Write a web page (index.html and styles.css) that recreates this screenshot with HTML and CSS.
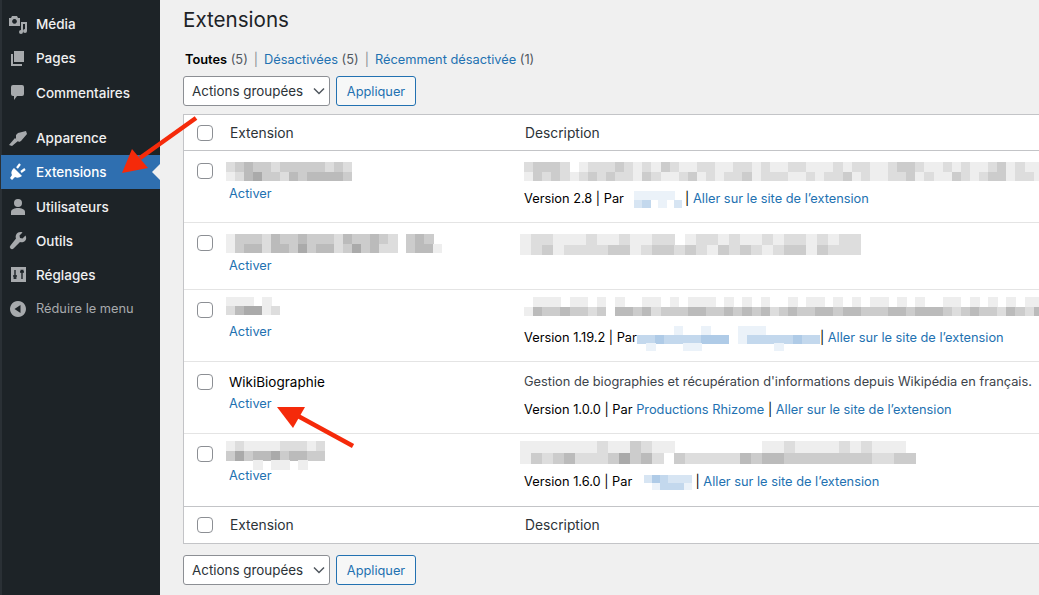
FILE: index.html
```html
<!DOCTYPE html>
<html lang="fr">
  <head>
    <meta charset="UTF-8" />
    <title>Extensions</title>
    <link rel="stylesheet" href="styles.css">
  </head>
  <body>
    <nav class="sidebar">
      <ul class="menu">
        <li class="menu-item">
          <svg class="menu-icon" viewBox="0 0 20 20"><path fill-rule="evenodd" d="M1 4h2l1-2h5l1 2h2v8H1zM6.500 5a2.400 2.400 0 1 0 .01 0z"/><path d="M13 8h6v9a2 2 0 1 1-2-2v-5h-2v8a2 2 0 1 1-2-2z"/></svg>
          Média
        </li>
        <li class="menu-item">
          <svg class="menu-icon" viewBox="0 0 20 20"><path d="M6 3h10v11H6z"/><path d="M3 6h2v10h9v2H3z"/></svg>
          Pages
        </li>
        <li class="menu-item">
          <svg class="menu-icon" viewBox="0 0 20 20"><path d="M5 2h9a2 2 0 0 1 2 2v7a2 2 0 0 1-2 2H9l-3 4v-4H5a2 2 0 0 1-2-2V4a2 2 0 0 1 2-2z"/></svg>
          Commentaires
        </li>
        <li class="menu-item menu-group">
          <svg class="menu-icon" viewBox="0 0 20 20"><path d="M8 7l2-2 8-2 1 3-6 7-2 1-3-3zM7 10l3 3-6 5-3-1z"/></svg>
          Apparence
        </li>
        <li class="menu-item active">
          <svg class="menu-icon" viewBox="0 0 20 20"><path d="M6 6l8 8c-3 2-5 2-7 1l-3 3-2-2 2-3C3 11 3 9 6 6z"/><path class="plug-pin" d="M9 6l3-4M13 10l4-3"/></svg>
          Extensions
        </li>
        <li class="menu-item">
          <svg class="menu-icon" viewBox="0 0 20 20"><circle cx="10" cy="6" r="4"/><path d="M3 18v-3c0-3 4-4 7-4s7 1 7 4v3z"/></svg>
          Utilisateurs
        </li>
        <li class="menu-item">
          <svg class="menu-icon" viewBox="0 0 20 20"><path d="M17.500 4.500l-3 3-2.500-.5-.5-2.500 3-3c-2.500-1-5 0-6 1.500s-1 3-.5 4.500L2.500 14.500a2 2 0 0 0 3 3L12 11c1.500.5 3.500.3 5-1 1.500-1.500 1.500-3.500.5-5.500z"/></svg>
          Outils
        </li>
        <li class="menu-item">
          <svg class="menu-icon" viewBox="0 0 20 20"><path d="M3 2h15v15H3z"/><path class="slider-line" d="M7 5v9M5 11h4M5.500 13h3M14 5v9M12 7h4M12.500 5.500h3"/></svg>
          Réglages
        </li>
        <li class="menu-item menu-collapse">
          <svg class="menu-icon" viewBox="0 0 20 20"><path fill-rule="evenodd" d="M10 2a8 8 0 1 1-.01 0zM12.500 6v8L6.500 10z"/></svg>
          Réduire le menu
        </li>
      </ul>
    </nav>

    <main class="content">
      <h1>Extensions</h1>

      <ul class="subsub">
        <li><b>Toutes</b> <span class="count">(5)</span></li>
        <li><a href="#">Désactivées</a> <span class="count">(5)</span></li>
        <li><a href="#">Récemment désactivée</a> <span class="count">(1)</span></li>
      </ul>

      <div class="tablenav">
        <div class="select">
          Actions groupées
          <svg class="chevron" viewBox="0 0 12 8"><path d="M1 1.500l5 5 5-5"/></svg>
        </div>
        <button class="button" type="button">Appliquer</button>
      </div>

      <table class="plugins">
        <thead>
          <tr>
            <th class="check"><input type="checkbox" /></th>
            <th class="name-col">Extension</th>
            <th>Description</th>
          </tr>
        </thead>
        <tbody>
          <tr class="row-1">
            <td class="check"><input type="checkbox" /></td>
            <td>
              <div class="plugin-name"><span class="mosaic pull-name" data-cw="9" data-ch="9.500" data-rows="dcbccdcccccdcd|edbaccdbcbbbbc"></span></div>
              <a href="#">Activer</a>
            </td>
            <td>
              <div class="plugin-desc"><span class="mosaic" data-cw="9.100" data-ch="9.500" data-rows="dcccdfedddcdedecdeeddeeddedeeddeeededdeedccdeededeedcedeecd|ecdcdedcdcddecdeedcededdcedddeededdcedeeddcedeecdedcceddedc"></span></div>
              <div class="plugin-meta">Version 2.8 | Par <span class="mosaic inline blue pull-author" data-cw="8" data-ch="8.500" data-rows="feeeeef|fdcfefd"></span> | <a href="#">Aller sur le site de l’extension</a></div>
            </td>
          </tr>
          <tr class="row-2">
            <td class="check"><input type="checkbox" /></td>
            <td>
              <div class="plugin-name"><span class="mosaic pull-name" data-cw="9" data-ch="9.500" data-rows="ecccdbccbcccdbccbcdfcbcf|ecbbdbbcacbbdcacbddfcbbe"></span></div>
              <a href="#">Activer</a>
            </td>
            <td>
              <div class="plugin-desc"><span class="mosaic pull-wide" data-cw="11" data-ch="10.500" data-rows="eddeeedeedeeddfeddedeededdededd|edceddddccedccdcdecdcdedccecddd"></span></div>
            </td>
          </tr>
          <tr class="row-3">
            <td class="check"><input type="checkbox" /></td>
            <td>
              <div class="plugin-name"><span class="mosaic pull-name pull-up" data-cw="9" data-ch="9" data-rows="eeefef|dbaaed"></span></div>
              <a href="#">Activer</a>
            </td>
            <td>
              <div class="plugin-desc"><span class="mosaic pull-up" data-cw="9.100" data-ch="9.500" data-rows="feeefeefefeffeefefeeefefefeffefeefefefeefefeffeefefefefeefee|ebccbccdcfbbcbdcccbbccbcbcbdcbccbbcbbcccbbcbbbcdcbccdbcdbcbd"></span></div>
              <div class="plugin-meta">Version 1.19.2 | Par<span class="mosaic inline blue" data-cw="9.150" data-ch="8.500" data-rows="ffffeffefffeeeffffff|ccbccccbbbfecccccbcc|fefffeeffffffffeffff"></span>| <a href="#">Aller sur le site de l’extension</a></div>
            </td>
          </tr>
          <tr class="row-4">
            <td class="check"><input type="checkbox" /></td>
            <td>
              <div class="plugin-name">WikiBiographie</div>
              <a href="#">Activer</a>
            </td>
            <td>
              <div class="plugin-desc">Gestion de biographies et récupération d'informations depuis Wikipédia en français.</div>
              <div class="plugin-meta">Version 1.0.0 | Par <a href="#">Productions Rhizome</a> | <a href="#">Aller sur le site de l’extension</a></div>
            </td>
          </tr>
          <tr class="row-5">
            <td class="check"><input type="checkbox" /></td>
            <td>
              <div class="plugin-name"><span class="mosaic pull-name pull-up" data-cw="9" data-ch="9.500" data-rows="edeeeeddded|cacbbacbbcc|fffefeefeff"></span></div>
              <a href="#">Activer</a>
            </td>
            <td>
              <div class="plugin-desc"><span class="mosaic pull-wide pull-up" data-cw="11" data-ch="11.500" data-rows="eeeeeeedeecdeeffffffffeedeeeededeeef|ecdcbdddcacbdfcdddddbcbbccccccccddcc"></span></div>
              <div class="plugin-meta">Version 1.6.0 | Par <span class="mosaic inline blue" data-cw="8" data-ch="7.500" data-rows="fdbcddd|ffeccce"></span> | <a href="#">Aller sur le site de l’extension</a></div>
            </td>
          </tr>
        </tbody>
        <tfoot>
          <tr>
            <th class="check"><input type="checkbox" /></th>
            <th class="name-col">Extension</th>
            <th>Description</th>
          </tr>
        </tfoot>
      </table>

      <div class="tablenav tablenav-bottom">
        <div class="select">
          Actions groupées
          <svg class="chevron" viewBox="0 0 12 8"><path d="M1 1.500l5 5 5-5"/></svg>
        </div>
        <button class="button" type="button">Appliquer</button>
      </div>
    </main>

    <svg class="arrows" viewBox="0 0 1039 595">
      <path class="arrow-line" d="M196 118L140 158"/>
      <path class="arrow-head" d="M122 173L132 149L148 168z"/>
      <path class="arrow-line" d="M353 446L298 416"/>
      <path class="arrow-head" d="M277 407L305 407L293 428z"/>
    </svg>

    <script src="mosaic.js"></script>
  </body>
</html>
```

FILE: styles.css
```css
* {
  box-sizing: border-box;
}
html,
body {
  height: 100%;
}
body {
  margin: 0;
  display: flex;
  overflow: hidden;
  position: relative;
  font-family: Inter, "Liberation Sans", sans-serif;
  font-size: 12.8px;
  line-height: 18px;
  color: #000;
  background: #f0f0f0;
}
a {
  color: #2271b1;
  text-decoration: none;
}

/* sidebar */
.sidebar {
  flex: 0 0 160px;
  background: #1d2327;
  border-left: 2px solid #2a3035;
}
.menu {
  list-style: none;
  margin: 7px 0 0;
  padding: 0;
}
.menu-item {
  position: relative;
  display: flex;
  align-items: center;
  gap: 8px;
  height: 34.3px;
  padding-left: 6px;
  font-size: 13.5px;
  font-weight: 500;
  color: #f0f0f1;
}
.menu-group {
  margin-top: 11px;
}
.menu-icon {
  width: 20px;
  height: 20px;
  fill: #a7aaad;
}
.active {
  margin-left: -1px;
  padding-left: 7px;
  background: #2f6fb0;
  color: #fff;
}
.active .menu-icon {
  fill: #fff;
}
.active::after {
  content: "";
  position: absolute;
  right: 0;
  top: 50%;
  margin-top: -8px;
  border: 8px solid transparent;
  border-right-color: #f0f0f0;
  border-left-width: 0;
}
.plug-pin {
  fill: none;
  stroke: #fff;
  stroke-width: 2.200;
}
.slider-line {
  fill: none;
  stroke: #1d2327;
  stroke-width: 1.400;
}
.menu-collapse {
  margin-top: -1px;
  font-size: 12.8px;
  font-weight: 400;
  color: #a7aaad;
}

/* main */
.content {
  flex: 1;
  min-width: 0;
  padding-left: 23px;
}
h1 {
  margin: 6px 0 0;
  font-size: 20.6px;
  line-height: 28px;
  font-weight: 400;
  color: #1d2327;
}
.subsub {
  list-style: none;
  display: flex;
  margin: 17px 0 0 2px;
  padding: 0;
  height: 18px;
  color: #50575e;
}
.subsub li + li::before {
  content: "|";
  margin: 0 6px;
  color: #8c8f94;
}
.subsub b {
  font-weight: 600;
  color: #000;
}
.count {
  color: #50575e;
}
.tablenav {
  display: flex;
  gap: 6px;
  margin: 7px 0 8px;
}
.tablenav-bottom {
  margin-top: 11px;
}
.select {
  display: flex;
  align-items: center;
  justify-content: space-between;
  width: 147px;
  height: 30px;
  padding: 0 4px 0 8px;
  font-size: 13.4px;
  color: #2c3338;
  background: #fff;
  border: 1px solid #8c8f94;
  border-radius: 3px;
}
.chevron {
  width: 12px;
  height: 8px;
  fill: none;
  stroke: #50575e;
  stroke-width: 1.500;
}
.button {
  width: 80px;
  height: 30px;
  padding: 0;
  font-family: inherit;
  font-size: 12.8px;
  color: #2271b1;
  background: #f6f7f7;
  border: 1px solid #2271b1;
  border-radius: 3px;
}

/* table */
.plugins {
  width: 860px;
  table-layout: fixed;
  border-collapse: separate;
  border-spacing: 0;
  background: #fff;
  border: 1px solid #c3c4c7;
}
.plugins th {
  height: 36px;
  padding: 1px 0 0 1px;
  text-align: left;
  font-size: 13.8px;
  font-weight: 400;
  color: #2c3338;
}
.plugins thead th {
  border-bottom: 1px solid #c3c4c7;
}
.plugins tfoot th {
  padding-top: 0;
  padding-bottom: 1px;
}
.plugins td {
  padding: 11px 0 0;
  vertical-align: top;
  border-bottom: 1px solid #e4e4e4;
}
.plugins tbody tr:last-child td {
  border-bottom-color: #c3c4c7;
}
.plugins .check {
  width: 45px;
  padding: 0 0 0 13px;
}
.plugins td.check {
  padding-top: 12px;
}
th:nth-child(2),
td:nth-child(2) {
  width: 295px;
}
.row-1 {
  height: 72px;
}
.row-2 {
  height: 67px;
}
.row-3 {
  height: 72px;
}
.row-4 {
  height: 72px;
}
.row-5 {
  height: 73px;
}
input[type="checkbox"] {
  appearance: none;
  display: block;
  width: 16px;
  height: 16px;
  margin: 0;
  background: #fff;
  border: 1px solid #8c8f94;
  border-radius: 4px;
}
.plugin-name {
  display: flow-root;
  height: 18px;
  margin-bottom: 4px;
  font-size: 13.5px;
}
.row-1 .plugin-name,
.row-2 .plugin-name {
  margin-bottom: 5px;
}
.plugin-desc {
  display: flow-root;
  height: 18px;
  margin-bottom: 10px;
  white-space: nowrap;
  color: #3c434a;
}
.plugin-meta {
  height: 18px;
  white-space: nowrap;
}

/* blurred parts of the capture */
.mosaic {
  display: block;
}
.mosaic svg {
  display: block;
}
.mosaic.inline {
  display: inline-block;
  vertical-align: middle;
  margin: -14px 0;
}
.mosaic.pull-author {
  margin-left: -2px;
}
.pull-name {
  margin-left: -3px;
}
.pull-wide {
  margin-left: -4px;
}
.pull-up {
  margin-top: -4px;
}

/* the red arrows drawn on the capture */
.arrows {
  position: absolute;
  left: 0;
  top: 0;
  width: 1039px;
  height: 595px;
  pointer-events: none;
}
.arrow-line {
  fill: none;
  stroke: #f52a0a;
  stroke-width: 4.500;
}
.arrow-head {
  fill: #f52a0a;
}
```

FILE: mosaic.js
```js
// each letter of data-rows is one block of the pixelated text: 0 dark, f white
document.querySelectorAll(".mosaic").forEach(function (el) {
  let rows = el.dataset.rows.split("|");
  let cw = parseFloat(el.dataset.cw);
  let ch = parseFloat(el.dataset.ch);
  let isBlue = el.classList.contains("blue");
  let width = rows[0].length * cw;
  let height = rows.length * ch;
  let rects = "";

  rows.forEach(function (row, y) {
    row.split("").forEach(function (letter, x) {
      let level = parseInt(letter, 16);
      if (level === 15) return;
      let color = "";
      if (isBlue) {
        let n = 15 - level;
        color = `rgb(${255 - n * 20},${255 - n * 13},${255 - n * 6})`;
      } else {
        let grey = level * 16 + level;
        color = `rgb(${grey},${grey},${grey})`;
      }
      rects += `<rect x="${x * cw}" y="${y * ch}" width="${cw + 0.5}" height="${ch + 0.5}" fill="${color}"/>`;
    });
  });

  el.style.width = width + "px";
  el.style.height = height + "px";
  el.innerHTML = `<svg width="${width}" height="${height}" shape-rendering="crispEdges">${rects}</svg>`;
});
```
